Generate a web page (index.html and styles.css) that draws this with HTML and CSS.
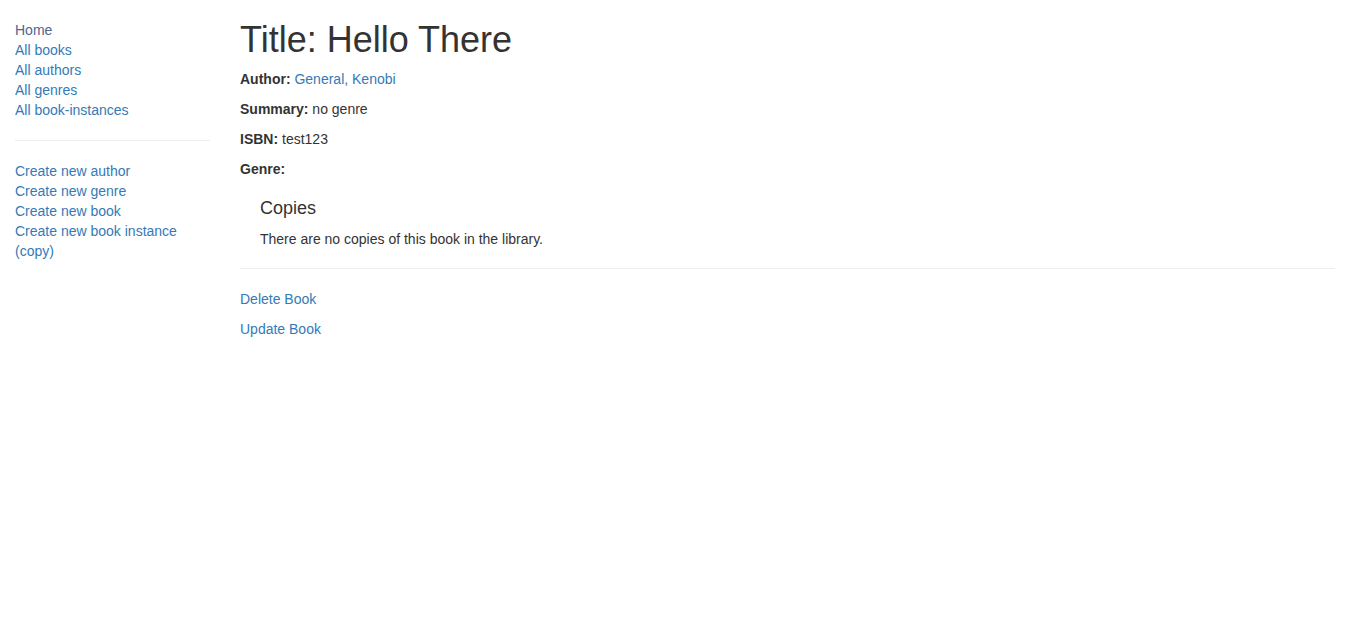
FILE: index.html
```html
<!DOCTYPE html>
<html lang="en">
<head>
<meta charset="utf-8">
<title>Hello There</title>
<link rel="stylesheet" href="styles.css">
</head>
<body>
<div class="container">
  <div class="row">
    <div class="sidebar">
      <ul class="sidebar-nav">
        <li><a class="visited" href="#">Home</a></li>
        <li><a href="#">All books</a></li>
        <li><a href="#">All authors</a></li>
        <li><a href="#">All genres</a></li>
        <li><a href="#">All book-instances</a></li>
      </ul>
      <hr class="rule">
      <ul class="sidebar-nav second">
        <li><a href="#">Create new author</a></li>
        <li><a href="#">Create new genre</a></li>
        <li><a href="#">Create new book</a></li>
        <li><a href="#">Create new book instance (copy)</a></li>
      </ul>
    </div>
    <div class="content">
      <h1 class="title">Title: Hello There</h1>
      <p class="para"><strong>Author:</strong> <a href="#">General, Kenobi</a></p>
      <p class="para"><strong>Summary:</strong> no genre</p>
      <p class="para"><strong>ISBN:</strong> test123</p>
      <p class="para"><strong>Genre:</strong> </p>
      <div class="copies">
        <h4 class="subtitle">Copies</h4>
        <p class="para">There are no copies of this book in the library.</p>
      </div>
      <hr class="rule after-copies">
      <p class="para"><a href="#">Delete Book</a></p>
      <p class="para"><a href="#">Update Book</a></p>
    </div>
  </div>
</div>
</body>
</html>
```
FILE: styles.css
```css
* { box-sizing: border-box; }
html, body { margin: 0; padding: 0; }
body {
  font-family: "Liberation Sans", Arial, Helvetica, sans-serif;
  font-size: 14px;
  line-height: 1.42857143;
  color: #333;
  background: #fff;
}
a { color: #337ab7; text-decoration: none; }
a.visited { color: #4d6690; }
.container { padding: 0 15px; }
.row { display: flex; margin: 0 -15px; }
.sidebar { width: 16.66666667%; padding: 0 15px; flex: none; }
.content { width: 83.33333333%; padding: 0 15px; flex: none; }
.sidebar-nav { list-style: none; margin: 20px 0 0 0; padding: 0; }
.sidebar-nav.second { margin-top: 0; }
.rule {
  margin: 20px 0;
  border: 0;
  border-top: 1px solid #eee;
  height: 0;
}
.rule.after-copies { margin-top: 19.2px; }
.title {
  font-size: 36px;
  font-weight: 500;
  line-height: 1.1;
  margin: 20px 0 9.4px;
}
.subtitle {
  font-size: 18px;
  font-weight: 500;
  line-height: 1.1;
  margin: 10px 0 10px;
}
.para { margin: 0 0 10px; }
.copies { margin-left: 20px; margin-top: 20px; }
strong { font-weight: bold; }
```
